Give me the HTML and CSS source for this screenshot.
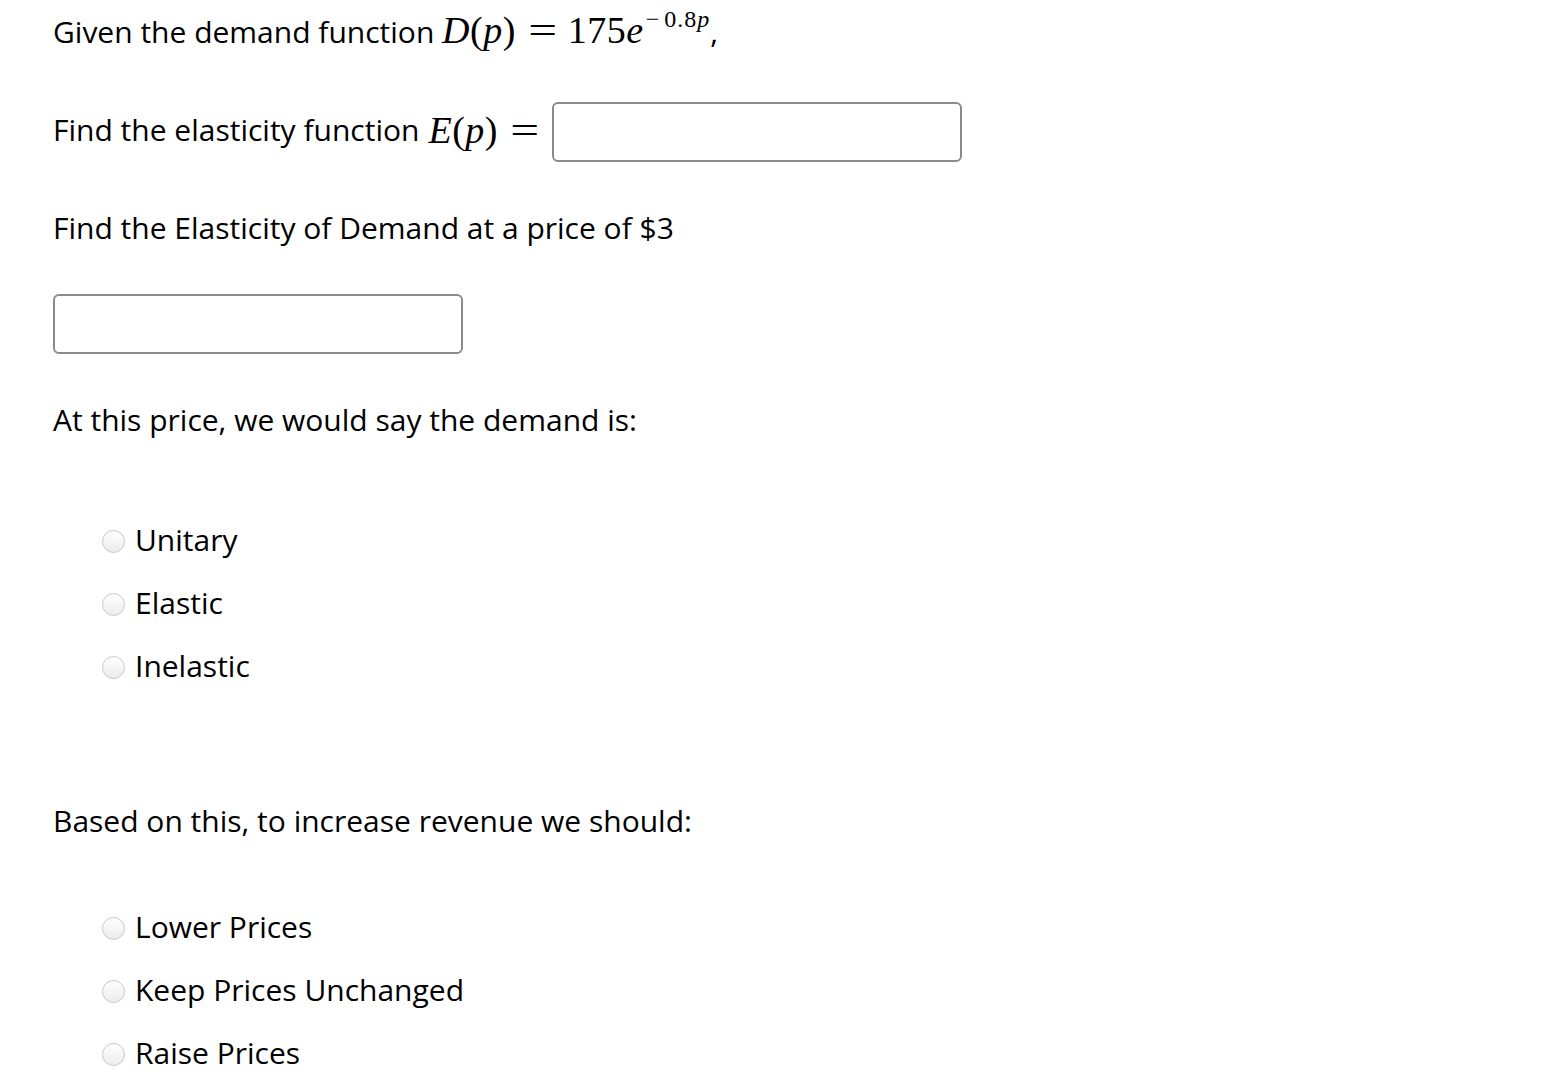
FILE: index.html
```html
<!DOCTYPE html>
<html>
<head>
<meta charset="utf-8">
<link rel="stylesheet" href="styles.css">
</head>
<body>
<div class="page">
  <p class="line l1">Given the demand function <span class="math"><i>D</i>(<i>p</i>)<span class="eq">=</span>175<i>e</i><span class="sup"><span class="minus">−</span>0.8<i>p</i></span></span>,</p>
  <div class="line l2"><span class="lbl">Find the elasticity function</span><span class="math"><i>E</i>(<i>p</i>)<span class="eq">=</span></span><span class="box box-inline"></span></div>
  <p class="line l3">Find the Elasticity of Demand at a price of $3</p>
  <div class="box box-block"></div>
  <p class="line l4">At this price, we would say the demand is:</p>
  <ul class="opts opts1">
    <li><span class="radio"></span>Unitary</li>
    <li><span class="radio"></span>Elastic</li>
    <li><span class="radio"></span>Inelastic</li>
  </ul>
  <p class="line l5">Based on this, to increase revenue we should:</p>
  <ul class="opts opts2">
    <li><span class="radio"></span>Lower Prices</li>
    <li><span class="radio"></span>Keep Prices Unchanged</li>
    <li><span class="radio"></span>Raise Prices</li>
  </ul>
</div>
</body>
</html>
```
FILE: styles.css
```css
html, body { margin: 0; padding: 0; background: #fff; }
body { font-family: "Open Sans", sans-serif; font-size: 30px; color: #000; }
.page { padding: 0 0 0 53px; }
.line { margin: 0; height: 64px; line-height: 64px; white-space: nowrap; }
.l2 { margin-top: 36px; display: flex; align-items: center; }
.l2 .lbl, .l2 .math { position: relative; top: -2px; }
.lbl { margin-right: 9px; }
.l3 { margin-top: 32px; }
.l4 { margin-top: 34px; }
.l5 { margin-top: 92px; }
.math { font-family: "Liberation Serif", serif; font-size: 38px; letter-spacing: 0.5px; line-height: 1; }
.math i { font-style: italic; }
.eq { display: inline-block; margin: 0 14px 0 16px; font-style: normal; transform: scaleX(1.35); }
.sup { font-size: 24px; position: relative; top: -16px; margin-left: 2px; letter-spacing: 1px; }
.minus { margin-right: 4px; }
.box { display: inline-block; width: 406px; height: 56px; border: 2px solid #8a8a8a; border-radius: 6px; box-sizing: content-box; }
.box-inline { margin-left: 2px; }
.box-block { display: block; margin-top: 34px; }
.opts { list-style: none; margin: 0; padding: 0 0 0 49px; }
.opts1 { margin-top: 56px; }
.opts2 { margin-top: 42px; }
.opts li { height: 63px; display: flex; align-items: center; }
.radio { width: 23px; height: 23px; border-radius: 50%; border: 1px solid #c8c8c8; background: linear-gradient(#ffffff, #ececec); margin-right: 10px; box-sizing: border-box; flex: none; position: relative; top: 2px; }
```
